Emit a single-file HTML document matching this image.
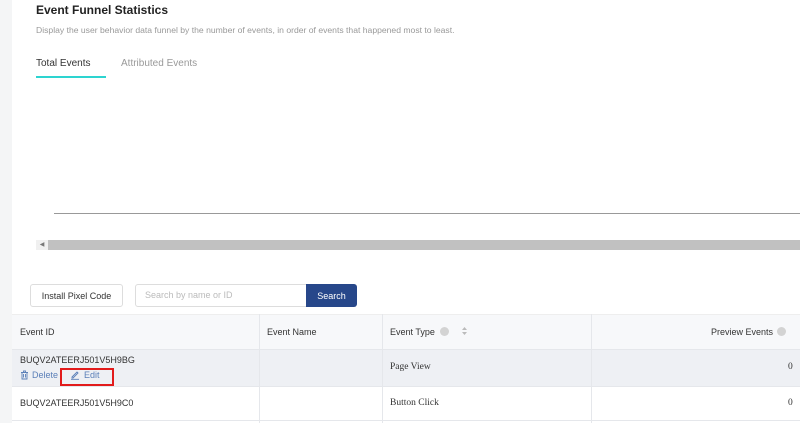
<!DOCTYPE html>
<html><head><style>
body{margin:0;width:800px;height:423px;overflow:hidden;background:#f4f5f6;font-family:"Liberation Sans",sans-serif;position:relative}
.card{position:absolute;left:12px;top:0;width:788px;height:423px;background:#fff}
.a{position:absolute;white-space:nowrap}
.th{background:#f7f8fa}
.t{font-size:9px;color:#333}
.s{font-family:'Liberation Serif',serif;font-size:9.5px;color:#333}
</style></head><body>
<div class="card"></div>
<div class="a" style="left:36px;top:3px;font-size:12px;font-weight:bold;color:#222">Event Funnel Statistics</div>
<div class="a" style="left:36px;top:25px;font-size:8.6px;color:#999">Display the user behavior data funnel by the number of events, in order of events that happened most to least.</div>
<div class="a" style="left:36px;top:58px;font-size:10px;color:#333">Total Events</div>
<div class="a" style="left:36px;top:76px;width:70px;height:2px;background:#2dd4d0"></div>
<div class="a" style="left:121px;top:58px;font-size:10px;color:#999">Attributed Events</div>
<div class="a" style="left:54px;top:213px;width:746px;height:1px;background:#999"></div>
<div class="a" style="left:36px;top:240px;width:12px;height:10px;background:#f0f0f0;font-size:6px;color:#777;text-align:center;line-height:10px">◀</div>
<div class="a" style="left:48px;top:240px;width:752px;height:10px;background:#c1c1c1"></div>
<div class="a" style="left:30px;top:284px;width:91px;height:21px;border:1px solid #ddd;border-radius:3px;font-size:9px;color:#333;text-align:center;line-height:22px">Install Pixel Code</div>
<div class="a" style="left:135px;top:284px;width:171px;height:21px;border:1px solid #ddd;border-radius:3px 0 0 3px;font-size:9px;color:#bbb;line-height:21px;text-indent:9px">Search by name or ID</div>
<div class="a" style="left:306px;top:284px;width:51px;height:23px;background:#27478a;border-radius:0 3px 3px 0;font-size:9px;color:#fff;text-align:center;line-height:24px">Search</div>
<div class="a th" style="left:12px;top:314px;width:788px;height:35px;border-top:1px solid #eee"></div>
<div class="a" style="left:12px;top:349px;width:788px;height:36px;background:#eef0f4;border-top:1px solid #e5e7eb;border-bottom:1px solid #e5e7eb"></div>
<div class="a" style="left:12px;top:420px;width:788px;height:1px;background:#e5e7eb"></div>
<div class="a" style="left:259px;top:314px;width:1px;height:109px;background:#e5e7eb"></div>
<div class="a" style="left:382px;top:314px;width:1px;height:109px;background:#e5e7eb"></div>
<div class="a" style="left:591px;top:314px;width:1px;height:109px;background:#e5e7eb"></div>
<div class="a t" style="left:20px;top:327px">Event ID</div>
<div class="a t" style="left:267px;top:327px">Event Name</div>
<div class="a t" style="left:390px;top:327px">Event Type</div>
<div class="a" style="left:440px;top:327px;width:9px;height:9px;border-radius:50%;background:#d3d3d3"></div>
<svg class="a" style="left:461px;top:326px" width="7" height="10"><path d="M3.5 1L6 4H1Z M3.5 9L6 6H1Z" fill="#bbb"/></svg>
<div class="a t" style="left:711px;top:327px">Preview Events</div>
<div class="a" style="left:777px;top:327px;width:9px;height:9px;border-radius:50%;background:#d3d3d3"></div>
<div class="a t" style="left:20px;top:355px">BUQV2ATEERJ501V5H9BG</div>
<svg class="a" style="left:20px;top:370px" width="9" height="10"><path d="M1 2.5H8M3.5 2.5V1H5.5V2.5M2 2.5V9H7V2.5M3.5 4V7.5M5.5 4V7.5" fill="none" stroke="#5a7fb8" stroke-width="0.9"/></svg>
<div class="a" style="left:32px;top:370px;font-size:9px;color:#5a7fb8">Delete</div>
<svg class="a" style="left:70px;top:370px" width="10" height="10"><path d="M2 7L7 2L8 3L3 8H2Z M1 9.3H9" fill="none" stroke="#5a7fb8" stroke-width="0.9"/></svg>
<div class="a" style="left:84px;top:370px;font-size:9px;color:#5a7fb8">Edit</div>
<div class="a" style="left:60px;top:368px;width:50px;height:14px;border:2px solid #e21b1b"></div>
<div class="a s" style="left:390px;top:362px">Page View</div>
<div class="a s" style="left:788px;top:362px">0</div>
<div class="a t" style="left:20px;top:398px">BUQV2ATEERJ501V5H9C0</div>
<div class="a s" style="left:390px;top:398px">Button Click</div>
<div class="a s" style="left:788px;top:398px">0</div>
</body></html>
